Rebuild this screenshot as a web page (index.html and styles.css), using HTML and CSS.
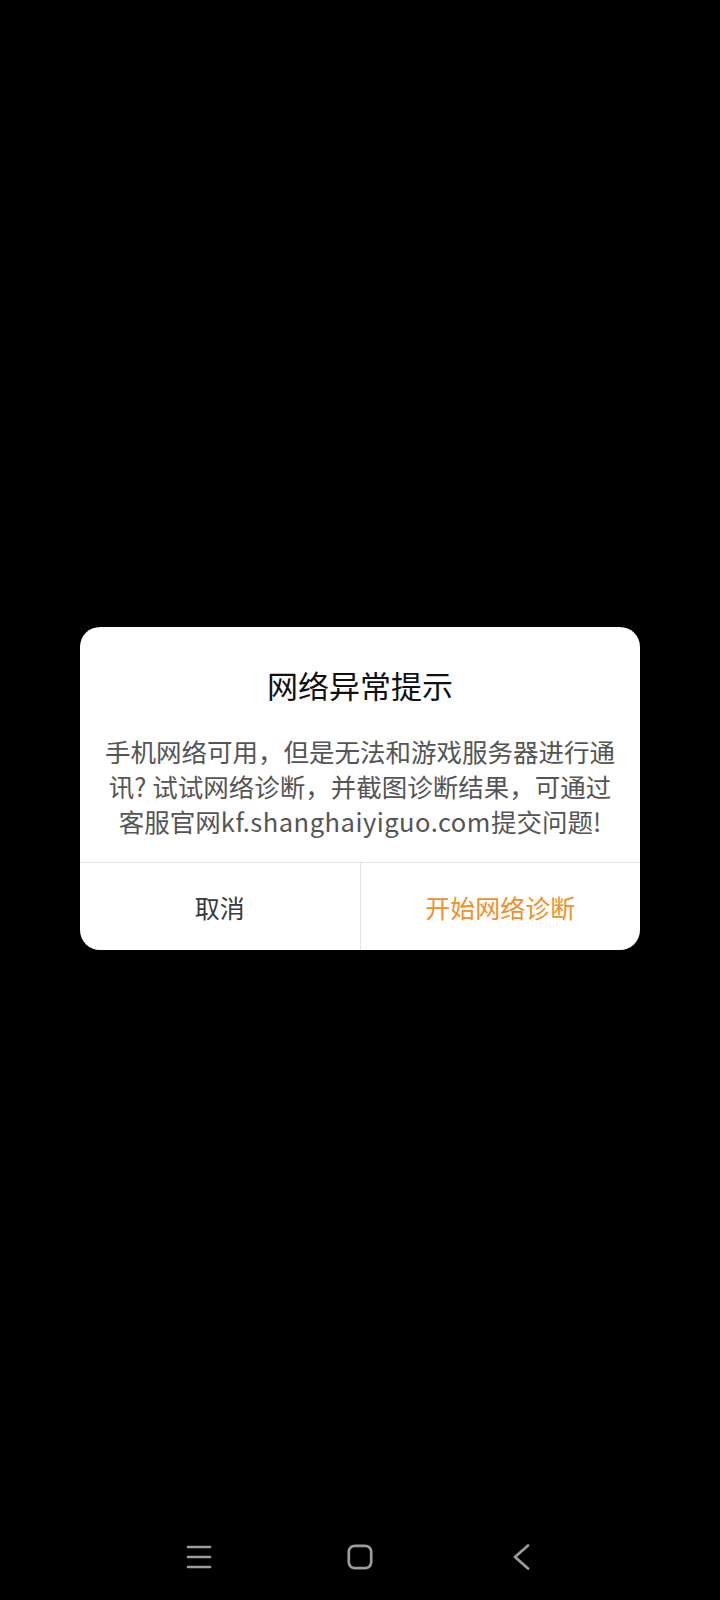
FILE: index.html
```html
<!DOCTYPE html>
<html lang="zh-CN">
<head>
<meta charset="utf-8">
<title>网络异常提示</title>
<link rel="stylesheet" href="styles.css">
</head>
<body>
<div class="screen">
  <div class="dialog">
    <div class="title">网络异常提示</div>
    <div class="message">手机网络可用，但是无法和游戏服务器进行通<br>讯? 试试网络诊断，并截图诊断结果，可通过<br>客服官网<span class="url">kf.shanghaiyiguo.com</span>提交问题!</div>
    <div class="actions">
      <div class="btn btn-cancel">取消</div>
      <div class="btn btn-ok">开始网络诊断</div>
    </div>
  </div>
  <div class="nav">
    <div class="nav-cell">
      <svg width="26" height="26" viewBox="0 0 26 26"><g stroke="#9c9c9c" stroke-width="2.7" stroke-linecap="round"><line x1="2" y1="3" x2="24" y2="3"/><line x1="2" y1="13" x2="24" y2="13"/><line x1="2" y1="23" x2="24" y2="23"/></g></svg>
    </div>
    <div class="nav-cell">
      <svg width="26" height="26" viewBox="0 0 26 26"><rect x="1.8" y="1.8" width="22.4" height="22.4" rx="6" fill="none" stroke="#9c9c9c" stroke-width="2.7"/></svg>
    </div>
    <div class="nav-cell">
      <svg width="26" height="26" viewBox="0 0 26 26"><polyline points="20,1.5 7,13 20,24.5" fill="none" stroke="#9c9c9c" stroke-width="2.7" stroke-linecap="round" stroke-linejoin="round"/></svg>
    </div>
  </div>
</div>
</body>
</html>
```

FILE: styles.css
```css
html, body {
  margin: 0;
  padding: 0;
  background: #000;
}
body {
  font-family: "Noto Sans CJK SC", "Noto Sans", sans-serif;
}
.screen {
  width: 720px;
  height: 1600px;
  display: flex;
  flex-direction: column;
  align-items: center;
}
.dialog {
  margin-top: 627px;
  width: 560px;
  background: #fff;
  border-radius: 20px;
  overflow: hidden;
}
.title {
  padding-top: 38px;
  height: 40px;
  line-height: 40px;
  font-size: 31px;
  color: #111;
  text-align: center;
}
.message {
  margin-top: 28px;
  padding: 0 16px 24px;
  font-size: 25.5px;
  line-height: 35px;
  color: #555;
  text-align: center;
  white-space: nowrap;
}
.url {
  letter-spacing: 0.5px;
}
.actions {
  display: flex;
  border-top: 1px solid #e3e3e3;
  height: 87px;
}
.btn {
  flex: 1;
  display: flex;
  align-items: center;
  justify-content: center;
  font-size: 25px;
}
.btn-cancel {
  color: #3a3a3a;
  border-right: 1px solid #e3e3e3;
}
.btn-ok {
  color: #f0902c;
}
.nav {
  margin-top: auto;
  height: 86px;
  width: 483px;
  display: flex;
  align-items: center;
}
.nav-cell {
  flex: 1;
  display: flex;
  justify-content: center;
  align-items: center;
}
.nav-cell svg {
  display: block;
}
```
